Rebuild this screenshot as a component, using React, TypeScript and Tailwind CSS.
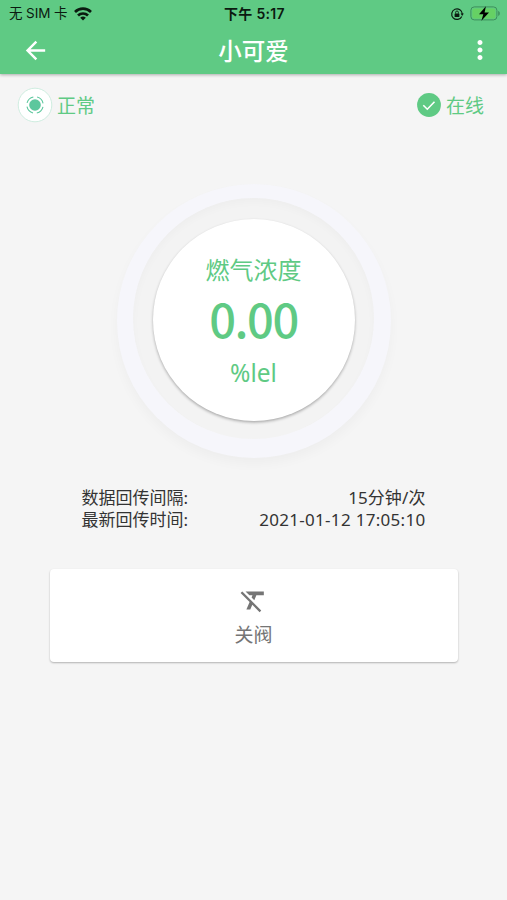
import React from 'react';
import { MdArrowBack, MdFormatClear, MdMoreVert } from 'react-icons/md';

interface InfoRowProps {
  label: string;
  value: string;
  valueClass: string;
}

const WifiIcon = () => (
  <svg viewBox="0 0 18 14" className="h-[14px] w-[18px]" fill="none" stroke="#0b1a10" strokeWidth="2.7">
    <path d="M1 4.9a11.6 11.6 0 0 1 16 0" />
    <path d="M4 8.5a7.2 7.2 0 0 1 10 0" />
    <path d="M9 13.6 6.2 10.8a4 4 0 0 1 5.6 0z" fill="#0b1a10" stroke="none" />
  </svg>
);

const RotationLockIcon = () => (
  <svg viewBox="0 0 14 14" className="h-[14px] w-[14px]" fill="none" stroke="#0b1a10">
    <path d="M11.8 9.4A5.3 5.3 0 1 1 12.3 7" strokeWidth="1.2" />
    <path d="M10.6 6.6h3.2l-1.6 2.3z" fill="#0b1a10" stroke="none" />
    <rect x="4.6" y="6.4" width="4.8" height="3.6" rx="0.5" fill="#0b1a10" stroke="none" />
    <path d="M5.6 6.6V5.4a1.4 1.4 0 0 1 2.8 0v1.2" strokeWidth="0.9" />
  </svg>
);

const BatteryIcon = () => (
  <svg viewBox="0 0 31 16" className="h-4 w-[31px]">
    <rect x="0.9" y="0.9" width="26" height="13" rx="3.4" fill="none" stroke="#3f8f5b" strokeWidth="1" />
    <rect x="2.4" y="2.4" width="23" height="10" rx="2" fill="#66d164" />
    <path d="M28.2 5.1c2.1.6 2.1 4.2 0 4.8z" fill="#3f8f5b" />
    <path d="M15.9 0.2 9 8.2h4.3l-1.9 6.6 7.6-8.3h-4.4z" fill="#000" />
  </svg>
);

const SensorIcon = () => (
  <svg viewBox="0 0 36 36" className="h-9 w-9">
    <circle cx="18" cy="18" r="16.8" fill="#fff" stroke="#c9ebdd" strokeWidth="0.9" />
    <circle cx="18" cy="18" r="5.8" fill="#5cc79d" />
    <circle
      cx="18"
      cy="18"
      r="8.2"
      fill="none"
      stroke="#5cc79d"
      strokeWidth="1.1"
      strokeDasharray="9 3.88"
      strokeDashoffset="-1.94"
    />
  </svg>
);

const OnlineIcon = () => (
  <svg viewBox="0 0 24 24" className="h-6 w-6">
    <circle cx="12" cy="12" r="11.9" fill="#5fca84" />
    <path d="m6.3 12.2 4 4 7.2-7.5" fill="none" stroke="#fff" strokeWidth="1.6" />
  </svg>
);

const InfoRow: React.FC<InfoRowProps> = ({ label, value, valueClass }) => (
  <div className="flex justify-between">
    <span>{label}</span>
    <span className={valueClass}>{value}</span>
  </div>
);

const Header = () => (
  <header className="relative z-10 h-[74px] bg-[#5fca84] shadow-[0_1px_3px_rgba(0,0,0,0.3)]">
    <div className="grid h-[27px] grid-cols-3 items-center pl-[9px] pr-[6px] font-[Inter,'Noto_Sans_CJK_SC',sans-serif] text-[13.5px] text-[#0b1a10]">
      <div className="flex items-center">
        <span className="mr-[5px] w-[60px] whitespace-nowrap tracking-[-0.1px]">无 SIM 卡</span>
        <WifiIcon />
      </div>
      <span className="pr-[1px] text-center text-[14px] font-semibold tracking-[0.3px]">下午 5:17</span>
      <div className="flex items-center justify-end gap-[6px]">
        <RotationLockIcon />
        <BatteryIcon />
      </div>
    </div>
    <div className="grid h-[46px] grid-cols-3 items-center pl-[21px] pr-[12px] text-white">
      <button aria-label="返回" className="justify-self-start">
        <MdArrowBack className="h-[29px] w-[29px]" />
      </button>
      <h1 className="pr-[9px] text-center text-[23.5px] font-medium leading-8">小可爱</h1>
      <button aria-label="更多" className="justify-self-end">
        <MdMoreVert className="h-[30px] w-[30px]" />
      </button>
    </div>
  </header>
);

const Gauge = () => (
  <div className="flex h-[274px] w-[274px] justify-center rounded-full bg-[#f6f6fb] pt-[14px] shadow-[0_6px_12px_rgba(0,0,0,0.03)]">
    <div className="flex h-[241px] w-[241px] justify-center rounded-full bg-[#f3f3f3] pt-[21px] shadow-[inset_0_4px_8px_rgba(0,0,0,0.025)]">
      <div className="flex h-[202px] w-[202px] flex-col items-center rounded-full bg-white pt-[33px] text-[#5fca84] shadow-[0_1.5px_3px_rgba(0,0,0,0.3)]">
        <span className="text-[24px] leading-[34px]">燃气浓度</span>
        <span className="mt-[2px] text-[47px] font-medium leading-[60px] tracking-[-1.5px]">0.00</span>
        <span className="mt-[8px] font-['Noto_Sans',sans-serif] text-[24.5px] leading-[34px]">%lel</span>
      </div>
    </div>
  </div>
);

const App = () => {
  return (
    <div className="min-h-[900px] bg-[#f5f5f5] font-['Noto_Sans_CJK_SC',sans-serif]">
      <Header />
      <main className="flex flex-col items-center">
        <div className="flex h-[62px] w-full items-center justify-between pl-[17px] pr-[23px] text-[19px] text-[#5fca84]">
          <div className="flex items-center gap-[4px]">
            <SensorIcon />
            <span>正常</span>
          </div>
          <div className="flex items-center gap-[5px]">
            <OnlineIcon />
            <span>在线</span>
          </div>
        </div>
        <div className="mt-[48px]">
          <Gauge />
        </div>
        <div className="mt-[29px] w-[344px] font-['Noto_Sans','Noto_Sans_CJK_SC',sans-serif] text-[17px] leading-[22px] text-[#333]">
          <InfoRow label="数据回传间隔:" value="15分钟/次" valueClass="tracking-[0.1px]" />
          <InfoRow label="最新回传时间:" value="2021-01-12 17:05:10" valueClass="tracking-[0.3px]" />
        </div>
        <button className="mt-[38px] flex h-[93px] w-[408px] flex-col items-center rounded-[4px] bg-white pt-[16px] text-[#757575] shadow-[0_1px_2px_rgba(0,0,0,0.28)]">
          <MdFormatClear className="h-[31px] w-[31px]" />
          <span className="mt-[4px] text-[19px] leading-[28px]">关阀</span>
        </button>
      </main>
    </div>
  );
};

export default App;
